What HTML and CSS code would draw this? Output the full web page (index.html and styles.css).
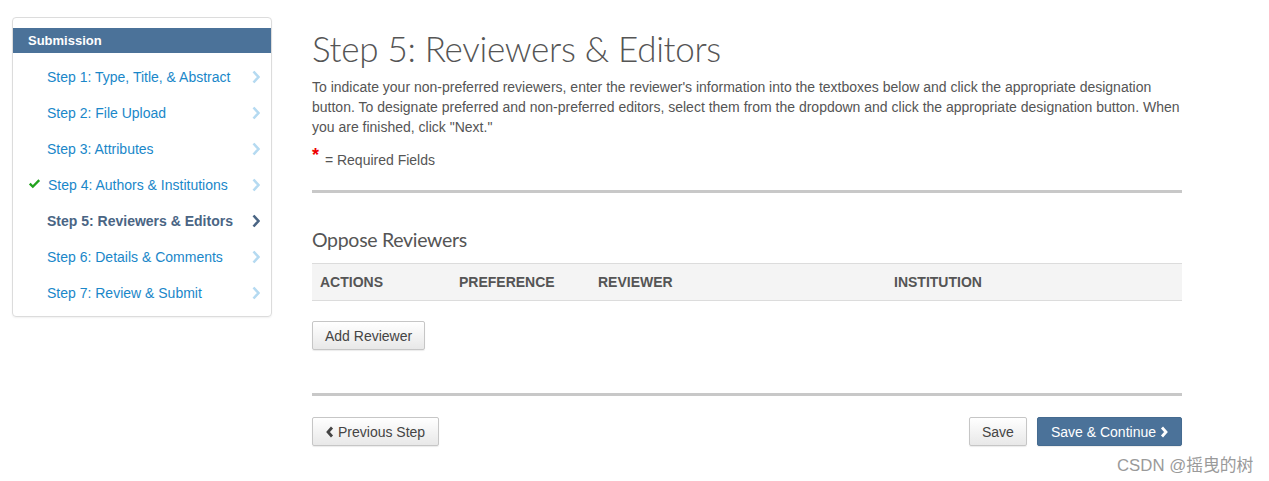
FILE: index.html
```html
<!DOCTYPE html>
<html>
<head>
<meta charset="utf-8">
<link rel="stylesheet" href="styles.css">
</head>
<body>
<div class="page">
  <aside class="sidebar">
    <div class="side-head">Submission</div>
    <ul class="steps">
      <li class="step"><span class="mark"></span><span class="label">Step 1: Type, Title, &amp; Abstract</span><svg class="chev" viewBox="0 0 8 14"><polyline points="1.5,1.5 6.5,7 1.5,12.5"/></svg></li>
      <li class="step"><span class="mark"></span><span class="label">Step 2: File Upload</span><svg class="chev" viewBox="0 0 8 14"><polyline points="1.5,1.5 6.5,7 1.5,12.5"/></svg></li>
      <li class="step"><span class="mark"></span><span class="label">Step 3: Attributes</span><svg class="chev" viewBox="0 0 8 14"><polyline points="1.5,1.5 6.5,7 1.5,12.5"/></svg></li>
      <li class="step"><span class="mark"><svg class="check" viewBox="0 0 14 12"><path d="M1 6.5 L2.8 4.6 L5.2 7 L11.2 1 L13 2.8 L5.2 10.6 Z"/></svg></span><span class="label">Step 4: Authors &amp; Institutions</span><svg class="chev" viewBox="0 0 8 14"><polyline points="1.5,1.5 6.5,7 1.5,12.5"/></svg></li>
      <li class="step active"><span class="mark"></span><span class="label">Step 5: Reviewers &amp; Editors</span><svg class="chev" viewBox="0 0 8 14"><polyline points="1.5,1.5 6.5,7 1.5,12.5"/></svg></li>
      <li class="step"><span class="mark"></span><span class="label">Step 6: Details &amp; Comments</span><svg class="chev" viewBox="0 0 8 14"><polyline points="1.5,1.5 6.5,7 1.5,12.5"/></svg></li>
      <li class="step"><span class="mark"></span><span class="label">Step 7: Review &amp; Submit</span><svg class="chev" viewBox="0 0 8 14"><polyline points="1.5,1.5 6.5,7 1.5,12.5"/></svg></li>
    </ul>
  </aside>
  <main class="main">
    <h1 class="title">Step 5: Reviewers &amp; Editors</h1>
    <p class="intro">To indicate your non-preferred reviewers, enter the reviewer's information into the textboxes below and click the appropriate designation button. To designate preferred and non-preferred editors, select them from the dropdown and click the appropriate designation button. When you are finished, click "Next."</p>
    <p class="required"><span class="star">*</span> = Required Fields</p>
    <hr class="rule">
    <h2 class="section">Oppose Reviewers</h2>
    <div class="thead">
      <div class="th">ACTIONS</div>
      <div class="th">PREFERENCE</div>
      <div class="th">REVIEWER</div>
      <div class="th">INSTITUTION</div>
    </div>
    <div class="add-row"><button class="btn">Add Reviewer</button></div>
    <hr class="rule rule2">
    <div class="footer">
      <button class="btn wide"><svg class="bchev" viewBox="0 0 8 12"><polyline points="6,1.5 2,6 6,10.5"/></svg>Previous Step</button>
      <div class="right">
        <button class="btn">Save</button>
        <button class="btn wide primary">Save &amp; Continue<svg class="bchev after" viewBox="0 0 8 12"><polyline points="2,1.5 6,6 2,10.5"/></svg></button>
      </div>
    </div>
  </main>
</div>
<div class="watermark">CSDN @摇曳的树</div>
</body>
</html>
```
FILE: styles.css
```css
html, body {
  margin: 0;
  padding: 0;
  background: #fff;
}
body {
  font-family: "Liberation Sans", Arial, sans-serif;
  font-size: 14px;
  color: #555;
  width: 1269px;
  height: 481px;
  overflow: hidden;
  position: relative;
}
.page {
  display: flex;
  align-items: flex-start;
  padding: 17px 0 0 12px;
}
.sidebar {
  width: 258px;
  border: 1px solid #dcdcdc;
  border-radius: 4px;
  box-shadow: 0 1px 2px rgba(0,0,0,0.06);
  padding: 10px 0 5px 0;
  margin-right: 40px;
}
.side-head {
  height: 25px;
  line-height: 25px;
  background: #4b7299;
  color: #fff;
  font-weight: bold;
  font-size: 13px;
  padding-left: 15px;
}
.steps {
  list-style: none;
  margin: 0;
  padding: 6px 0 0 0;
}
.step {
  display: flex;
  align-items: center;
  height: 36px;
  color: #1a87c9;
  font-size: 14px;
}
.mark {
  width: 34px;
  display: flex;
  justify-content: flex-start;
  padding-left: 15px;
  box-sizing: border-box;
}
.check {
  width: 13px;
  height: 12px;
  fill: #22a31e;
  margin-top: -2px;
}
.label {
  flex: 1;
}
.step:nth-child(4) .label { padding-left: 1px; }
.chev {
  width: 8px;
  height: 14px;
  margin-right: 11px;
  fill: none;
  stroke: #b5daf1;
  stroke-width: 2.6;
}
.step.active {
  color: #4a6584;
  font-weight: bold;
}
.step.active .chev {
  stroke: #4a6584;
}
.main {
  width: 870px;
}
.title {
  font-family: "Lato", sans-serif;
  font-weight: 300;
  font-size: 35px;
  line-height: 40px;
  color: #555;
  margin: 11px 0 9px 0;
  letter-spacing: -0.3px;
}
.intro {
  margin: 0;
  line-height: 20px;
  color: #555;
}
.required {
  margin: 12px 0 0 0;
  line-height: 20px;
  color: #555;
}
.star {
  color: #e00;
  font-size: 18px;
  font-weight: bold;
  position: relative;
  top: -4px;
  margin-right: 2px;
}
.rule {
  border: 0;
  height: 3px;
  background: #c8c8c8;
  margin: 20px 0 0 0;
}
.section {
  font-family: "Lato", sans-serif;
  font-weight: 400;
  font-size: 19.5px;
  line-height: 24px;
  color: #555;
  margin: 35px 0 11px 0;
  letter-spacing: -0.3px;
}
.thead {
  display: grid;
  grid-template-columns: 139px 139px 296px 296px;
  background: #f4f4f4;
  border-top: 1px solid #dcdcdc;
  border-bottom: 1px solid #dcdcdc;
  height: 36px;
  align-items: center;
}
.th {
  font-weight: bold;
  font-size: 14px;
  color: #555;
  padding-left: 8px;
}
.add-row {
  margin-top: 20px;
}
.btn {
  font-family: "Liberation Sans", Arial, sans-serif;
  font-size: 14px;
  color: #444;
  height: 29px;
  padding: 0 12px;
  border: 1px solid #c6c6c6;
  border-radius: 2px;
  background: linear-gradient(#fff, #e8e8e8);
  box-shadow: 0 1px 1px rgba(0,0,0,0.08);
  display: inline-flex;
  align-items: center;
  cursor: pointer;
}
.btn.wide {
  padding: 0 13px;
}
.rule2 {
  margin-top: 43px;
}
.footer {
  display: flex;
  justify-content: space-between;
  margin-top: 21px;
}
.right {
  display: flex;
  gap: 10px;
}
.btn.primary {
  background: #4b7299;
  border-color: #456b90;
  color: #fff;
}
.bchev {
  width: 8px;
  height: 12px;
  fill: none;
  stroke: currentColor;
  stroke-width: 2.8;
  margin-right: 4px;
}
.bchev.after {
  margin: 0 0 0 4px;
}
.watermark {
  position: absolute;
  left: 1117px;
  top: 452px;
  font-family: "Liberation Sans", "Noto Sans CJK SC", sans-serif;
  font-size: 16.8px;
  color: #9a9a9a;
}
```
